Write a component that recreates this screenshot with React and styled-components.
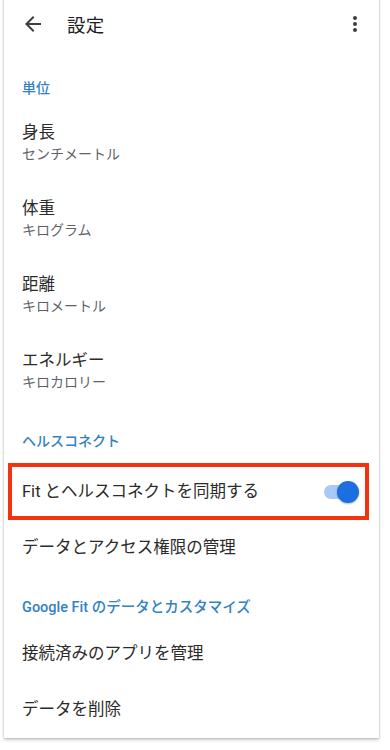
import React, { useState } from "react";
import styled, { createGlobalStyle } from "styled-components";

const GlobalStyle = createGlobalStyle`
  html, body {
    margin: 0;
    padding: 0;
    background: #ffffff;
  }
  body {
    font-family: Roboto, "Noto Sans CJK JP", sans-serif;
    -webkit-font-smoothing: antialiased;
  }
`;

const Page = styled.div`
  width: 390px;
  height: 750px;
  background: #ffffff;
  overflow: hidden;
`;

const Card = styled.div`
  width: 375px;
  margin-left: 4px;
  margin-top: -6px;
  padding-top: 6px;
  background: #ffffff;
  box-shadow: 0 2px 3px rgba(0, 0, 0, 0.22), 0 0 1px rgba(0, 0, 0, 0.35);
`;

const TopBar = styled.div`
  height: 47px;
  display: flex;
  align-items: center;
  padding: 0 12px 0 17px;
`;

const IconButton = styled.div`
  width: 24px;
  height: 24px;
  display: flex;
  align-items: center;
  justify-content: center;
  color: #3c4043;
`;

const Title = styled.div`
  flex: 1;
  margin-left: 22px;
  font-size: 18.5px;
  color: #202124;
  letter-spacing: 0.3px;
`;

const SectionHeader = styled.div`
  padding: ${({ $top }) => $top}px 18px ${({ $bottom }) => $bottom}px;
  font-size: ${({ $size }) => $size || 14}px;
  line-height: 20px;
  font-weight: 500;
  color: #3282c4;
`;

const Item = styled.div`
  height: ${({ $two }) => ($two ? 76 : 56)}px;
  display: flex;
  flex-direction: column;
  justify-content: ${({ $two }) => ($two ? "flex-start" : "center")};
  padding: ${({ $two }) => ($two ? "10px 18px 0" : "0 18px")};
  box-sizing: border-box;
`;

const ItemTitle = styled.div`
  font-size: 16.5px;
  line-height: 22px;
  color: #2b2b2b;
`;

const ItemSub = styled.div`
  font-size: 14px;
  line-height: 21px;
  color: #5f6368;
`;

const HighlightRow = styled.div`
  height: 57px;
  margin: 0 10px 0 4px;
  border: 4px solid #f3320f;
  box-sizing: border-box;
  display: flex;
  align-items: center;
  justify-content: space-between;
  padding: 0 8px 0 10px;
`;

const Track = styled.div`
  position: relative;
  width: 32px;
  height: 14px;
  border-radius: 7px;
  background: ${({ $on }) => ($on ? "#a9c8f5" : "#bdc1c6")};
  margin-right: 1px;
`;

const Thumb = styled.div`
  position: absolute;
  top: -4px;
  left: ${({ $on }) => ($on ? "13px" : "-3px")};
  width: 22px;
  height: 22px;
  border-radius: 50%;
  background: ${({ $on }) => ($on ? "#1b6fe0" : "#f1f3f4")};
  box-shadow: 0 1px 2px rgba(0, 0, 0, 0.3);
`;

const Switch = ({ on, onClick }) => (
  <Track $on={on} onClick={onClick}>
    <Thumb $on={on} />
  </Track>
);

const units = [
  { title: "身長", value: "センチメートル" },
  { title: "体重", value: "キログラム" },
  { title: "距離", value: "キロメートル" },
  { title: "エネルギー", value: "キロカロリー" },
];

const App = () => {
  const [sync, setSync] = useState(true);

  return (
    <Page>
      <GlobalStyle />
      <Card>
        <TopBar>
          <IconButton>
            <svg width="24" height="24" viewBox="0 0 24 24" fill="currentColor">
              <path d="M20 11H7.83l5.59-5.59L12 4l-8 8 8 8 1.41-1.41L7.83 13H20v-2z" />
            </svg>
          </IconButton>
          <Title>設定</Title>
          <IconButton>
            <svg width="24" height="24" viewBox="0 0 24 24" fill="currentColor">
              <circle cx="12" cy="6" r="2" />
              <circle cx="12" cy="12" r="2" />
              <circle cx="12" cy="18" r="2" />
            </svg>
          </IconButton>
        </TopBar>

        <SectionHeader $top={31} $bottom={14}>単位</SectionHeader>
        {units.map((u) => (
          <Item key={u.title} $two>
            <ItemTitle>{u.title}</ItemTitle>
            <ItemSub>{u.value}</ItemSub>
          </Item>
        ))}

        <SectionHeader $top={15} $bottom={12}>ヘルスコネクト</SectionHeader>
        <HighlightRow>
          <ItemTitle>Fit とヘルスコネクトを同期する</ItemTitle>
          <Switch on={sync} onClick={() => setSync(!sync)} />
        </HighlightRow>
        <Item>
          <ItemTitle>データとアクセス権限の管理</ItemTitle>
        </Item>

        <SectionHeader $top={22} $bottom={8} $size={14.5}>
          Google Fit のデータとカスタマイズ
        </SectionHeader>
        <Item>
          <ItemTitle>接続済みのアプリを管理</ItemTitle>
        </Item>
        <Item>
          <ItemTitle>データを削除</ItemTitle>
        </Item>
      </Card>
    </Page>
  );
};

export default App;
